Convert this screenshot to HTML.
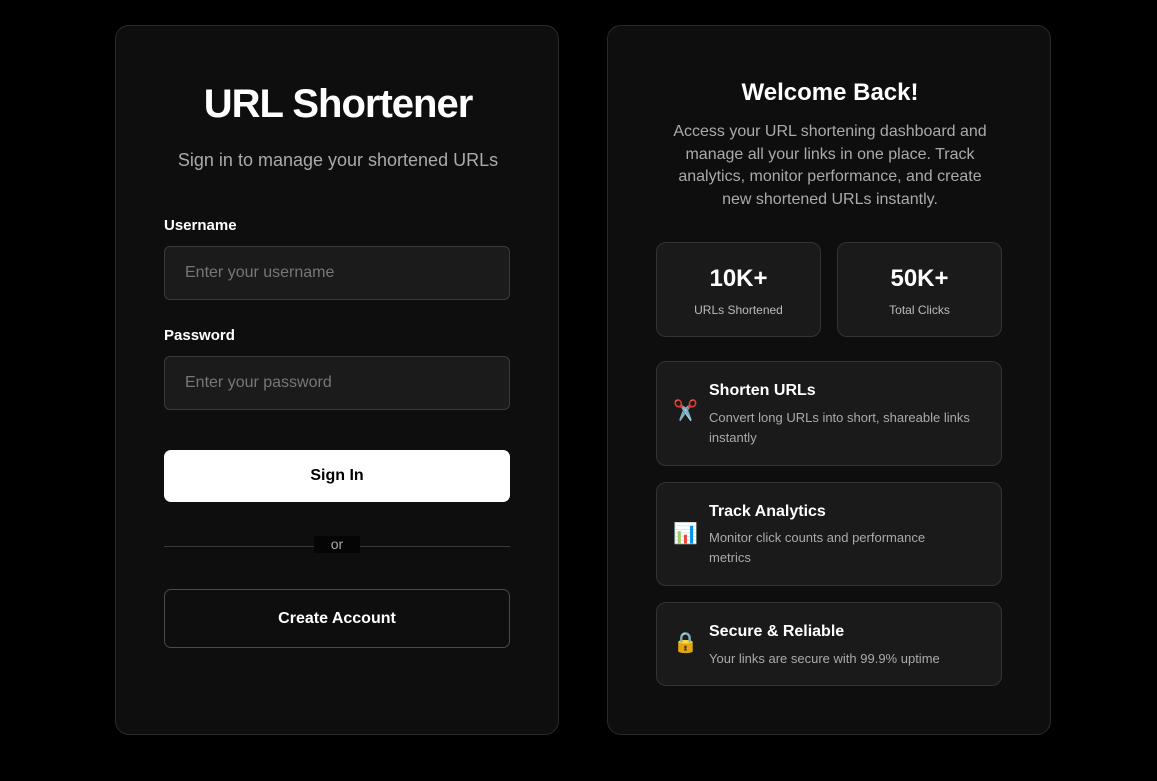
<!DOCTYPE html>
<html><head><meta charset="utf-8"><style>
*{box-sizing:border-box;margin:0;padding:0}
body{width:1157px;height:781px;background:#000;font-family:"Liberation Sans",sans-serif;position:relative;overflow:hidden;color:#fff}
.card{position:absolute;top:25px;width:444px;height:710px;background:#0e0e0e;border:1px solid #2a2a2a;border-radius:14px}
.a{position:absolute}
.c{text-align:center}
.inp{position:absolute;left:48px;width:346px;height:54px;background:#1b1b1b;border:1px solid #3a3a3a;border-radius:6px;color:#777;font-size:16px;padding:17px 20px}
.lbl{position:absolute;left:48px;font-size:15px;font-weight:bold}
.stat{position:absolute;top:216px;width:165px;height:95px;background:#1a1a1a;border:1px solid #333;border-radius:10px;text-align:center}
.stat b{display:block;font-size:24px;margin-top:22px}
.stat span{display:block;font-size:12px;color:#bbb;margin-top:10px}
.feat{position:absolute;left:48px;width:346px;background:#1a1a1a;border:1px solid #333;border-radius:10px}
.feat .t{position:absolute;left:52px;font-size:16px;font-weight:bold}
.feat .d{position:absolute;left:52px;font-size:13px;color:#aaa;line-height:20px;width:285px}
.feat .i{position:absolute;left:16px;font-size:20px}
</style></head><body>
<div class="card" style="left:115px">
 <div class="a c" style="left:0;width:444px;top:56px;font-size:40px;font-weight:bold;letter-spacing:-1px">URL Shortener</div>
 <div class="a c" style="left:0;width:444px;top:124px;font-size:18px;color:#aaa">Sign in to manage your shortened URLs</div>
 <div class="lbl" style="top:191px">Username</div>
 <div class="inp" style="top:220px">Enter your username</div>
 <div class="lbl" style="top:301px">Password</div>
 <div class="inp" style="top:330px">Enter your password</div>
 <div class="a c" style="left:48px;top:424px;width:346px;height:52px;background:#fff;border-radius:7px;color:#000;font-weight:bold;font-size:16px;line-height:52px">Sign In</div>
 <div class="a" style="left:48px;top:520px;width:346px;height:1px;background:#3a3a3a"></div>
 <div class="a c" style="left:198px;top:510px;width:46px;height:17px;background:#050505;color:#aaa;font-size:14px;line-height:17px">or</div>
 <div class="a c" style="left:48px;top:563px;width:346px;height:59px;border:1px solid #4a4a4a;border-radius:7px;font-weight:bold;font-size:16px;line-height:57px">Create Account</div>
</div>
<div class="card" style="left:607px">
 <div class="a c" style="left:0;width:444px;top:53px;font-size:24px;font-weight:bold">Welcome Back!</div>
 <div class="a c" style="left:20px;width:404px;top:95px;font-size:16px;color:#aaa;line-height:22.5px">Access your URL shortening dashboard and<br>manage all your links in one place. Track<br>analytics, monitor performance, and create<br>new shortened URLs instantly.</div>
 <div class="stat" style="left:48px"><b>10K+</b><span>URLs Shortened</span></div>
 <div class="stat" style="left:229px"><b>50K+</b><span>Total Clicks</span></div>
 <div class="feat" style="top:335px;height:105px"><div class="i" style="top:36px">✂️</div><div class="t" style="top:20px">Shorten URLs</div><div class="d" style="top:46px">Convert long URLs into short, shareable links instantly</div></div>
 <div class="feat" style="top:456px;height:104px"><div class="i" style="top:38px">📊</div><div class="t" style="top:20px">Track Analytics</div><div class="d" style="top:45px">Monitor click counts and performance<br>metrics</div></div>
 <div class="feat" style="top:576px;height:84px"><div class="i" style="top:27px">🔒</div><div class="t" style="top:20px">Secure &amp; Reliable</div><div class="d" style="top:46px">Your links are secure with 99.9% uptime</div></div>
</div>
</body></html>
